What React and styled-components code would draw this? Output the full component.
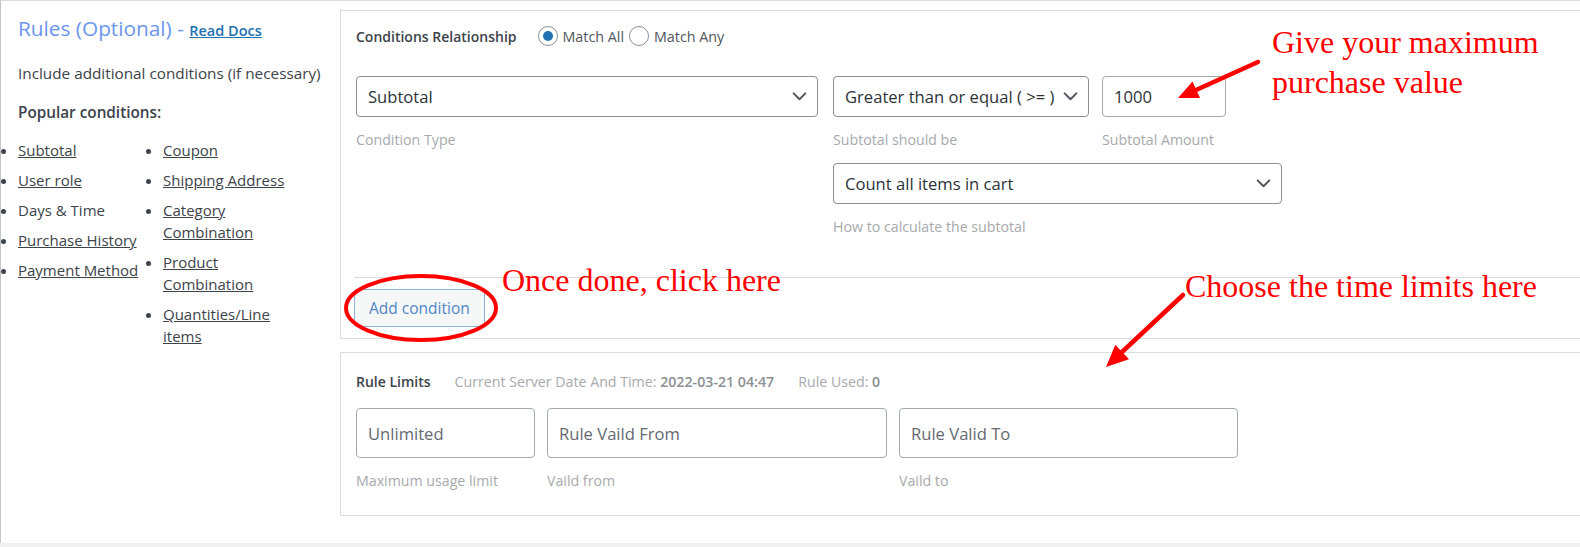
import React from "react";
import styled, { createGlobalStyle } from "styled-components";

const GlobalStyle = createGlobalStyle`
  body {
    margin: 0;
    background: #f0f0f1;
    font-family: "Open Sans", "Liberation Sans", sans-serif;
    color: #3c434a;
    overflow: hidden;
  }
`;

const Chevron = () => (
  <svg width="15" height="9" viewBox="0 0 16 10" fill="none">
    <path d="M1.5 1.5 L8 8 L14.5 1.5" stroke="#50575e" strokeWidth="2.2" strokeLinecap="round" strokeLinejoin="round" />
  </svg>
);

const popularLeft = [
  { text: "Subtotal", link: true },
  { text: "User role", link: true },
  { text: "Days & Time", link: false },
  { text: "Purchase History", link: true },
  { text: "Payment Method", link: true },
];

const popularRight = [
  "Coupon",
  "Shipping Address",
  "Category Combination",
  "Product Combination",
  "Quantities/Line items",
];

const App = () => {
  return (
    <StPage>
      <GlobalStyle />
      <StScreen>
        <StSidebar>
          <StTitle>
            Rules (Optional) - <StDocs href="#">Read Docs</StDocs>
          </StTitle>
          <StDesc>Include additional conditions (if necessary)</StDesc>
          <StPopular>Popular conditions:</StPopular>
          <StLists>
            <StList width="145px">
              {popularLeft.map((item) => (
                <li key={item.text}>
                  {item.link ? <a href="#">{item.text}</a> : item.text}
                </li>
              ))}
            </StList>
            <StList width="140px">
              {popularRight.map((text) => (
                <li key={text}>
                  <a href="#">{text}</a>
                </li>
              ))}
            </StList>
          </StLists>
        </StSidebar>

        <StMain>
          <StBox>
            <StConditions>
              <StRelation>
                <StHeading>Conditions Relationship</StHeading>
                <StRadioGroup>
                  <StRadio checked />
                  <span>Match All</span>
                  <StRadio />
                  <span>Match Any</span>
                </StRadioGroup>
              </StRelation>

              <StFields>
                <StField>
                  <StSelect width="462px">
                    <span>Subtotal</span>
                    <Chevron />
                  </StSelect>
                  <StHint>Condition Type</StHint>
                </StField>
                <StFieldStack>
                  <StFieldRow>
                    <StField>
                      <StSelect width="256px">
                        <span>Greater than or equal ( &gt;= )</span>
                        <Chevron />
                      </StSelect>
                      <StHint>Subtotal should be</StHint>
                    </StField>
                    <StField>
                      <StTextBox width="124px" height="41px">1000</StTextBox>
                      <StHint>Subtotal Amount</StHint>
                    </StField>
                  </StFieldRow>
                  <StField>
                    <StSelect width="449px">
                      <span>Count all items in cart</span>
                      <Chevron />
                    </StSelect>
                    <StHint>How to calculate the subtotal</StHint>
                  </StField>
                </StFieldStack>
              </StFields>
            </StConditions>
            <StDivider />
            <StFooter>
              <StButton>Add condition</StButton>
            </StFooter>
          </StBox>

          <StLimitBox>
            <StLimitHeader>
              <StHeading>Rule Limits</StHeading>
              <StMeta>
                Current Server Date And Time: <b>2022-03-21 04:47</b>
              </StMeta>
              <StMeta>
                Rule Used: <b>0</b>
              </StMeta>
            </StLimitHeader>
            <StLimitRow>
              <StField>
                <StTextBox width="179px" height="50px" muted>Unlimited</StTextBox>
                <StHint>Maximum usage limit</StHint>
              </StField>
              <StField>
                <StTextBox width="340px" height="50px" muted>Rule Vaild From</StTextBox>
                <StHint>Vaild from</StHint>
              </StField>
              <StField>
                <StTextBox width="339px" height="50px" muted>Rule Valid To</StTextBox>
                <StHint>Vaild to</StHint>
              </StField>
            </StLimitRow>
          </StLimitBox>
        </StMain>
      </StScreen>

      <StMarks width="1580" height="547" viewBox="0 0 1580 547">
        <ellipse cx="421" cy="308" rx="75" ry="32" fill="none" stroke="#ff0000" strokeWidth="4" />
        <line x1="1258" y1="62" x2="1196" y2="90" stroke="#ff0000" strokeWidth="4.5" strokeLinecap="round" />
        <polygon points="1178,98 1192.5,81.6 1200,98" fill="#ff0000" />
        <line x1="1183" y1="295" x2="1122" y2="352" stroke="#ff0000" strokeWidth="4.5" strokeLinecap="round" />
        <polygon points="1106,367 1115.3,344.7 1129,359.3" fill="#ff0000" />
      </StMarks>
      <StNote top="22px" left="1272px">
        Give your maximum
        <br />
        purchase value
      </StNote>
      <StNote top="260px" left="502px">Once done, click here</StNote>
      <StNote top="266px" left="1185px">Choose the time limits here</StNote>
    </StPage>
  );
};

export default App;

const StPage = styled.div`
  position: relative;
  width: 1580px;
  height: 547px;
  overflow: hidden;
`;

const StScreen = styled.div`
  display: flex;
  background: #fff;
  border-top: 1px solid #dcdcde;
  border-left: 1px solid #c3c4c7;
  padding-bottom: 27px;
`;

const StSidebar = styled.aside`
  flex: none;
  width: 339px;
  box-sizing: border-box;
  padding: 15px 0 0 17px;
`;

const StTitle = styled.h2`
  margin: 0;
  font-size: 20.8px;
  line-height: 24px;
  font-weight: 400;
  color: #6b96ee;
`;

const StDocs = styled.a`
  font-size: 14.5px;
  font-weight: 600;
  color: #2271b1;
  text-decoration: underline;
`;

const StDesc = styled.p`
  margin: 20px 0 0;
  font-size: 15.3px;
  line-height: 20px;
`;

const StPopular = styled.p`
  margin: 19px 0 0;
  font-size: 15.3px;
  line-height: 20px;
  font-weight: 600;
`;

const StLists = styled.div`
  display: flex;
  margin-top: 17px;
`;

const StList = styled.ul`
  width: ${({ width }) => width};
  margin: 0;
  padding: 0;
  list-style: disc;
  font-size: 15px;
  line-height: 22px;

  li {
    margin-bottom: 8px;
  }

  li::marker {
    color: #3c434a;
  }

  a {
    color: #3c434a;
    text-decoration: underline;
  }
`;

const StMain = styled.main`
  flex: none;
  width: 1262px;
  padding-top: 9px;
`;

const StBox = styled.section`
  border: 1px solid #dcdcde;
  background: #fff;
`;

const StConditions = styled.div`
  padding: 15px 15px 0 15px;
`;

const StRelation = styled.div`
  display: flex;
  align-items: center;
  height: 20px;
`;

const StHeading = styled.span`
  font-size: 14px;
  font-weight: 600;
  color: #3c434a;
`;

const StRadioGroup = styled.div`
  display: flex;
  align-items: center;
  gap: 5px;
  margin-left: 21px;
  font-size: 14.3px;
  color: #50575e;
`;

const StRadio = styled.span`
  position: relative;
  width: 20px;
  height: 20px;
  box-sizing: border-box;
  border: 1px solid #8c8f94;
  border-radius: 50%;
  background: #fff;

  &::after {
    content: "";
    display: ${({ checked }) => (checked ? "block" : "none")};
    position: absolute;
    top: 4px;
    left: 4px;
    width: 10px;
    height: 10px;
    border-radius: 50%;
    background: #2271b1;
  }
`;

const StFields = styled.div`
  display: flex;
  gap: 15px;
  margin-top: 30px;
`;

const StFieldStack = styled.div`
  display: flex;
  flex-direction: column;
  gap: 13px;
`;

const StFieldRow = styled.div`
  display: flex;
  gap: 13px;
`;

const StField = styled.div`
  display: flex;
  flex-direction: column;
  gap: 13px;
`;

const StSelect = styled.div`
  display: flex;
  align-items: center;
  justify-content: space-between;
  width: ${({ width }) => width};
  height: 41px;
  box-sizing: border-box;
  padding: 0 10px 0 11px;
  border: 1px solid #8c8f94;
  border-radius: 4px;
  font-size: 16.6px;
  color: #2c3338;
  white-space: nowrap;
`;

const StTextBox = styled.div`
  display: flex;
  align-items: center;
  width: ${({ width }) => width};
  height: ${({ height }) => height};
  box-sizing: border-box;
  padding: 0 11px;
  border: 1px solid #a7aaad;
  border-radius: 4px;
  font-size: 16.6px;
  color: ${({ muted }) => (muted ? "#646970" : "#2c3338")};
`;

const StHint = styled.span`
  font-size: 14.2px;
  line-height: 20px;
  color: #a7aaad;
`;

const StDivider = styled.hr`
  margin: 40px 0 0 13px;
  border: 0;
  border-top: 1px solid #dcdcde;
`;

const StFooter = styled.div`
  padding: 11px 13px 11px;
`;

const StButton = styled.button`
  height: 38px;
  padding: 0 14px;
  border: 1px solid #8fb4da;
  border-radius: 3px;
  background: #f6f7f7;
  font-family: inherit;
  font-size: 15.5px;
  color: #4f86c6;
`;

const StLimitBox = styled.section`
  margin-top: 13px;
  border: 1px solid #dcdcde;
  padding: 18px 15px 24px;
`;

const StLimitHeader = styled.div`
  display: flex;
  align-items: center;
  gap: 24px;
  height: 20px;
`;

const StMeta = styled.span`
  font-size: 14.2px;
  color: #a7aaad;

  b {
    font-weight: 600;
    color: #8c8f94;
  }
`;

const StLimitRow = styled.div`
  display: flex;
  gap: 12px;
  margin-top: 17px;
`;

const StMarks = styled.svg`
  position: absolute;
  top: 0;
  left: 0;
  pointer-events: none;
`;

const StNote = styled.div`
  position: absolute;
  top: ${({ top }) => top};
  left: ${({ left }) => left};
  font-family: "Liberation Serif", "Times New Roman", serif;
  font-size: 32px;
  line-height: 40px;
  color: #ff0000;
  white-space: nowrap;
  pointer-events: none;
`;
